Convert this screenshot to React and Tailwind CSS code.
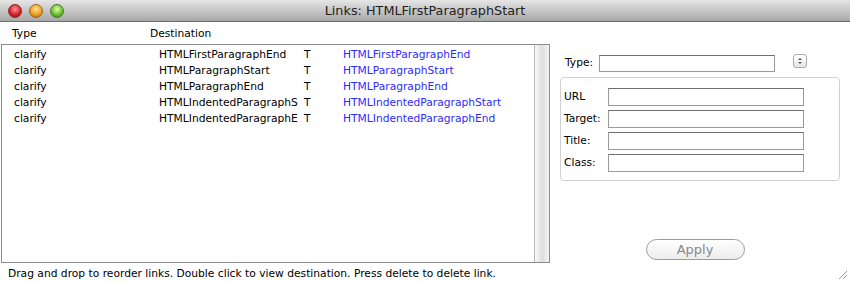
const rows = [
  ["clarify", "HTMLFirstParagraphEnd", "T", "HTMLFirstParagraphEnd"],
  ["clarify", "HTMLParagraphStart", "T", "HTMLParagraphStart"],
  ["clarify", "HTMLParagraphEnd", "T", "HTMLParagraphEnd"],
  ["clarify", "HTMLIndentedParagraphS", "T", "HTMLIndentedParagraphStart"],
  ["clarify", "HTMLIndentedParagraphE", "T", "HTMLIndentedParagraphEnd"],
];

function Field({ label }) {
  return (
    <div className="flex items-center h-[22px]">
      <span className="w-[47px] pl-[3px]">{label}</span>
      <div className="w-[196px] h-[18px] border border-[#9a9a9a] border-t-[#6f6f6f] bg-white" />
    </div>
  );
}

export default function App() {
  return (
    <div className="relative w-[850px] h-[282px] bg-white overflow-hidden text-[10.7px] text-black font-['DejaVu_Sans',sans-serif] flex flex-col">
      <header className="relative h-[22px] shrink-0 bg-gradient-to-b from-[#e6e6e6] to-[#a8a8a8] border-b border-[#6e6e6e] flex items-center justify-center">
        <div className="absolute left-[8px] top-[4px] flex gap-[7px]">
          <span className="w-[14px] h-[14px] rounded-full bg-[radial-gradient(circle_at_50%_35%,#ff9a9a,#d6222a_55%,#7a0f14)] border border-[#8a2a2a]" />
          <span className="w-[14px] h-[14px] rounded-full bg-[radial-gradient(circle_at_50%_35%,#ffe0a0,#f0a020_55%,#a05a08)] border border-[#9a6a20]" />
          <span className="w-[14px] h-[14px] rounded-full bg-[radial-gradient(circle_at_50%_35%,#d8ffb0,#6cc030_55%,#2f7010)] border border-[#4a7a2a]" />
        </div>
        <span className="text-[12.8px] text-[#222]">Links: HTMLFirstParagraphStart</span>
      </header>

      <div className="flex flex-1">
        <div className="w-[551px] flex flex-col">
          <div className="h-[22px] flex items-end pb-[2px]">
            <span className="w-[150px] pl-[12px]">Type</span>
            <span>Destination</span>
          </div>
          <div className="ml-[1px] h-[219px] border border-[#8c8c8c] flex">
            <div className="flex-1 pt-[2px]">
              {rows.map((r, i) => (
                <div key={i} className="flex h-[16px] items-center">
                  <span className="w-[157px] pl-[12px]">{r[0]}</span>
                  <span className="w-[145px] overflow-hidden whitespace-nowrap">{r[1]}</span>
                  <span className="w-[39px]">{r[2]}</span>
                  <span className="text-[#2b2bff]">{r[3]}</span>
                </div>
              ))}
            </div>
            <div className="w-[15px] border-l border-[#b8b8b8] bg-gradient-to-r from-[#fafafa] via-[#dedede] to-[#f4f4f4]" />
          </div>
          <div className="pl-[8px] pt-[3px]">
            Drag and drop to reorder links. Double click to view destination. Press delete to delete link.
          </div>
        </div>

        <div className="flex-1 flex flex-col pl-[10px] pr-[10px]">
          <div className="flex items-center h-[20px] mt-[31px]">
            <span className="pl-[5px] w-[39px]">Type:</span>
            <div className="w-[176px] h-[17px] border border-[#9a9a9a] border-t-[#6f6f6f] bg-white" />
            <div className="ml-[18px] w-[14px] h-[14px] mb-[4px] rounded-[3px] border border-[#aaa] bg-gradient-to-b from-white to-[#e6e6e6] flex flex-col items-center justify-center gap-[2px]">
              <span className="w-0 h-0 border-x-[2px] border-x-transparent border-b-[2px] border-b-[#555]" />
              <span className="w-0 h-0 border-x-[2px] border-x-transparent border-t-[2px] border-t-[#555]" />
            </div>
          </div>
          <div className="mt-[4px] w-[280px] h-[104px] border border-[#d0d0d0] rounded-[4px] pt-[8px] flex flex-col">
            <Field label="URL" />
            <Field label="Target:" />
            <Field label="Title:" />
            <Field label="Class:" />
          </div>
          <div className="flex-1 flex items-end justify-center pb-[22px] pr-[10px]">
            <button className="w-[99px] h-[21px] rounded-full border border-[#9c9c9c] bg-gradient-to-b from-white to-[#ececec] text-[13px] text-[#888]">
              Apply
            </button>
          </div>
        </div>
      </div>
      <svg className="absolute left-[836px] top-[268px]" width="12" height="12" viewBox="0 0 12 12">
        <path d="M11 3 L3 11 M11 7 L7 11" stroke="#9a9a9a" strokeWidth="1" />
      </svg>
    </div>
  );
}
